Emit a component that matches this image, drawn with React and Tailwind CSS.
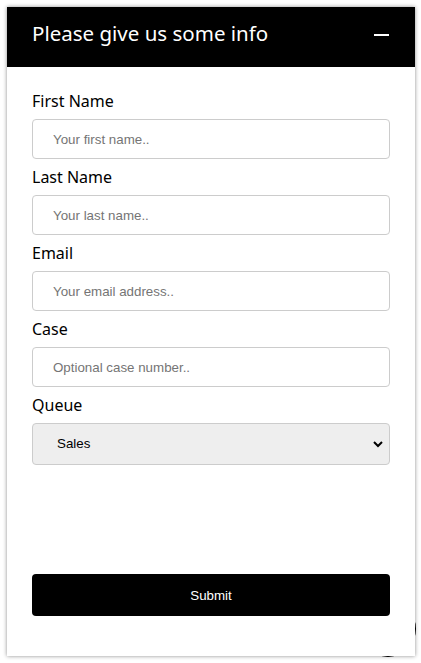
import React from 'react';

const fields = [
  { label: 'First Name', placeholder: 'Your first name..' },
  { label: 'Last Name', placeholder: 'Your last name..' },
  { label: 'Email', placeholder: 'Your email address..' },
  { label: 'Case', placeholder: 'Optional case number..' },
];

export default function App() {
  return (
    <div className="relative w-[421px] h-[663px] bg-white overflow-hidden">
      {/* chat bubble behind the panel */}
      <div className="absolute left-[360px] top-[601px] w-[56px] h-[56px] rounded-full bg-black" />

      <div className="relative ml-[7px] mt-[7px] w-[408px] h-[649px] bg-white flex flex-col shadow-[0_0_4px_rgba(0,0,0,0.45)]">
        {/* header */}
        <div className="h-[60px] bg-black flex items-center justify-between pl-[25px] pr-[26px]">
          <h1 className="text-white text-[20.5px] font-['Noto_Sans',sans-serif] leading-none pb-[8px]">
            Please give us some info
          </h1>
          <span className="block w-[15px] h-[2px] bg-white mb-[5px]" />
        </div>

        {/* form */}
        <form className="flex-1 flex flex-col px-[25px] pt-[22px] pb-[40px] font-['Liberation_Sans',Arial,sans-serif]">
          {fields.map((f) => (
            <div key={f.label} className="flex flex-col mb-[6px]">
              <label className="text-[16px] leading-[24px] text-black mb-[6px] font-['Noto_Sans',sans-serif]">
                {f.label}
              </label>
              <input
                type="text"
                placeholder={f.placeholder}
                className="h-[40px] w-full border border-[#cccccc] rounded-[4px] pl-[20px] text-[13.33px] placeholder:text-[#757575] outline-none"
              />
            </div>
          ))}
          <div className="flex flex-col">
            <label className="text-[16px] leading-[24px] text-black mb-[6px] font-['Noto_Sans',sans-serif]">
              Queue
            </label>
            <div className="relative">
              <select className="appearance-none h-[42px] w-full border border-[#cccccc] rounded-[4px] bg-[#eeeeee] pl-[24px] text-[13.33px] text-black outline-none">
                <option>Sales</option>
                <option>Support</option>
              </select>
              <svg
                className="absolute right-[7px] top-[17px] pointer-events-none"
                width="10"
                height="8"
                viewBox="0 0 10 8"
                fill="none"
              >
                <path d="M1 2l4 4 4-4" stroke="#000" strokeWidth="2" />
              </svg>
            </div>
          </div>

          <div className="flex-1" />

          <button
            type="button"
            className="h-[42px] w-full bg-black text-white rounded-[4px] text-[13.33px] pt-[1px]"
          >
            Submit
          </button>
        </form>
      </div>
    </div>
  );
}
